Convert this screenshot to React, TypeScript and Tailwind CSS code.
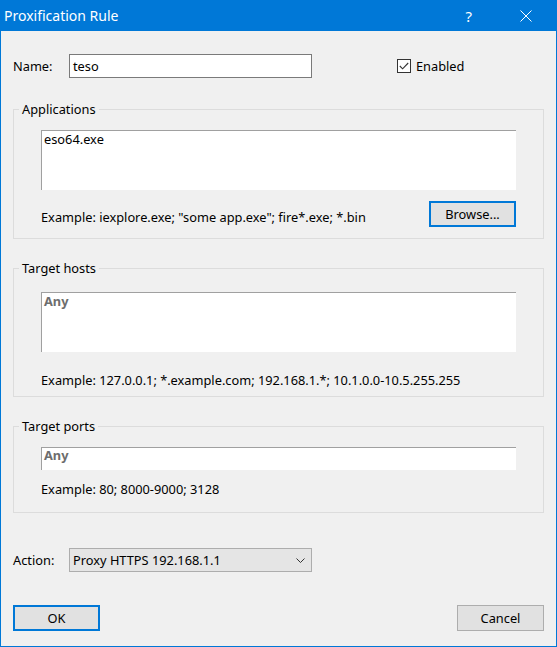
import React from "react";

function GroupBox({ title, className, children }: { title: string; className?: string; children: React.ReactNode }) {
  return (
    <fieldset className={"border border-[#dcdcdc] " + (className ?? "")}>
      <legend className="ml-[5px] px-[3px] leading-[16px]">{title}</legend>
      <div className="px-[27px]">{children}</div>
    </fieldset>
  );
}

function Button({ label, primary, className }: { label: string; primary?: boolean; className?: string }) {
  return (
    <div
      className={
        "w-[87px] h-[26px] flex items-center justify-center bg-[#e1e1e1] " +
        (primary ? "border-2 border-[#0078d7] " : "border border-[#adadad] ") +
        (className ?? "")
      }
    >
      {label}
    </div>
  );
}

export default function App() {
  return (
    <div className="w-[557px] h-[647px] bg-[#0078d7] flex flex-col px-px pb-px font-['Noto_Sans',sans-serif] text-[12.8px] text-black leading-[15px]">
      {/* title bar */}
      <div className="h-[31px] shrink-0 flex items-center text-white">
        <span className="ml-[3px] text-[14px] leading-[18px]">Proxification Rule</span>
        <span className="ml-auto mr-[48px] text-[15px] leading-[18px]">?</span>
        <svg width="12" height="12" viewBox="0 0 12 12" className="mr-[24px]">
          <path d="M0.5 0.5 L11.5 11.5 M11.5 0.5 L0.5 11.5" stroke="white" strokeWidth="1" />
        </svg>
      </div>

      {/* dialog body */}
      <div className="flex-1 bg-[#f0f0f0] flex flex-col px-[12px]">
        <div className="mt-[23px] h-[24px] flex items-center">
          <span className="w-[56px]">Name:</span>
          <div className="w-[243px] h-[24px] border border-[#7a7a7a] bg-white flex items-center pl-[3px]">teso</div>
          <div className="ml-[85px] flex items-center">
            <div className="w-[14px] h-[14px] border border-[#333333] bg-white flex items-center justify-center">
              <svg width="10" height="8" viewBox="0 0 10 8">
                <path d="M0.8 4 L3.6 6.8 L9.2 1" fill="none" stroke="#333333" strokeWidth="1.1" />
              </svg>
            </div>
            <span className="ml-[5px]">Enabled</span>
          </div>
        </div>

        <GroupBox title="Applications" className="mt-[23px] pb-[11px]">
          <div className="mt-[13px] h-[60px] bg-white border-t border-l border-[#a0a0a0] pl-[2px] pt-[1px]">eso64.exe</div>
          <div className="mt-[11px] h-[26px] flex items-end">
            <span className="mb-[2px]">Example: iexplore.exe; "some app.exe"; fire*.exe; *.bin</span>
            <Button label="Browse..." primary className="ml-auto" />
          </div>
        </GroupBox>

        <GroupBox title="Target hosts" className="mt-[21px] pb-[8px]">
          <div className="mt-[16px] h-[60px] bg-white border-t border-l border-[#a0a0a0] pl-[2px] pt-[1px] font-bold text-[#6d6d6d]">
            Any
          </div>
          <div className="mt-[21px]">Example: 127.0.0.1; *.example.com; 192.168.1.*; 10.1.0.0-10.5.255.255</div>
        </GroupBox>

        <GroupBox title="Target ports" className="mt-[21px] pb-[15px]">
          <div className="mt-[13px] h-[23px] bg-white border-t border-l border-[#a0a0a0] pl-[2px] font-bold text-[#6d6d6d]">
            Any
          </div>
          <div className="mt-[12px]">Example: 80; 8000-9000; 3128</div>
        </GroupBox>

        <div className="mt-[35px] h-[24px] flex items-center">
          <span className="w-[56px]">Action:</span>
          <div className="w-[243px] h-[24px] border border-[#adadad] bg-[#e5e5e5] flex items-center pl-[3px]">
            <span>Proxy HTTPS 192.168.1.1</span>
            <svg width="9" height="5" viewBox="0 0 9 5" className="ml-auto mr-[6px]">
              <path d="M0.5 0.5 L4.5 4.5 L8.5 0.5" fill="none" stroke="#333333" strokeWidth="1" />
            </svg>
          </div>
        </div>

        <div className="mt-[33px] flex justify-between">
          <Button label="OK" primary />
          <Button label="Cancel" />
        </div>
      </div>
    </div>
  );
}
